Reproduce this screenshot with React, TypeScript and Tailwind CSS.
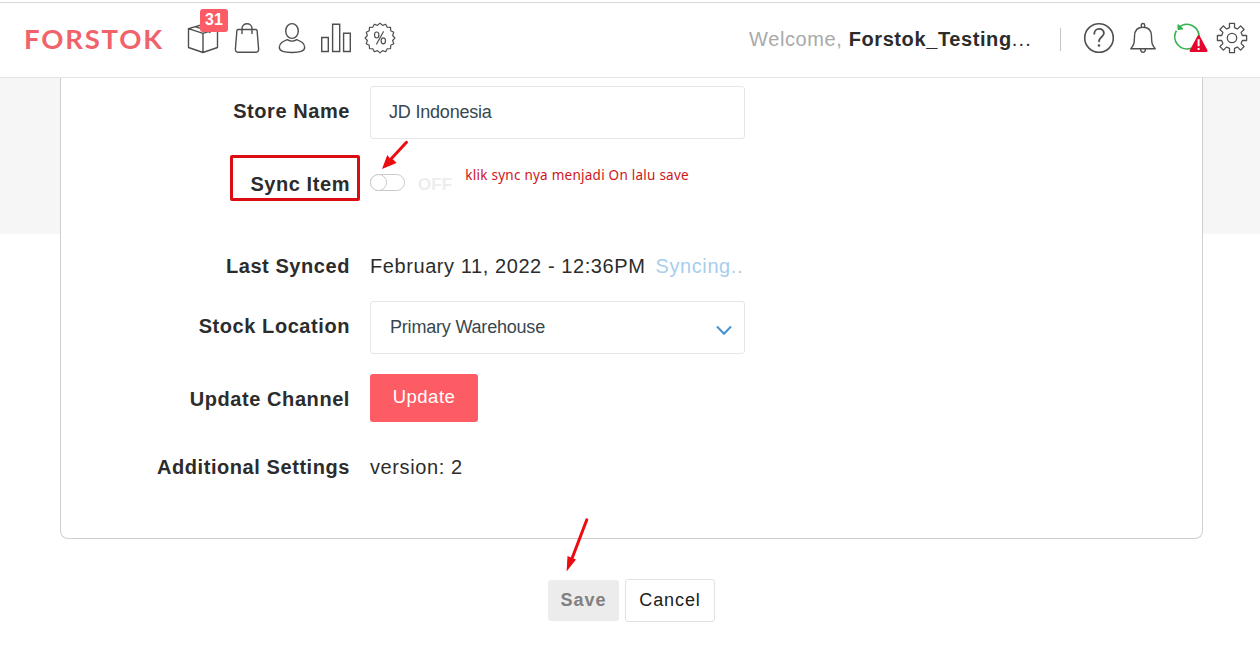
import type { ReactNode } from "react";

const stroke = { fill: "none", stroke: "#4f4f4f", strokeWidth: 1.4, strokeLinejoin: "round", strokeLinecap: "round" } as const;

function starPath(c: number, outer: number, inner: number, count: number) {
  const pts: string[] = [];
  for (let i = 0; i < count * 2; i++) {
    const a = (i / count) * Math.PI - Math.PI / 2 + Math.PI / count;
    const r = i % 2 === 0 ? inner : outer;
    pts.push(`${(c + r * Math.cos(a)).toFixed(2)} ${(c + r * Math.sin(a)).toFixed(2)}`);
  }
  return "M" + pts.join("L") + "Z";
}

function gearPath(c: number) {
  const pts: string[] = [];
  for (let i = 0; i < 8; i++) {
    const a = (i * Math.PI) / 4;
    const shape: [number, number][] = [[-4.1, -9.6], [-2.5, -10.4], [-2.5, -14.6], [2.5, -14.6], [2.5, -10.4], [4.1, -9.6]];
    for (const [x, y] of shape) {
      const px = c + x * Math.cos(a) - y * Math.sin(a);
      const py = c + x * Math.sin(a) + y * Math.cos(a);
      pts.push(`${px.toFixed(2)} ${py.toFixed(2)}`);
    }
  }
  return "M" + pts.join("L") + "Z";
}

function Box() {
  return (
    <svg width="32" height="32" viewBox="0 0 32 32" {...stroke}>
      <path d="M1.5 6.7 16 11.3 30.5 6.7V25.5L16 30.5 1.5 25.5ZM16 11.3V30.5M1.5 6.7 16 2.5 30.5 6.7M8.5 4.8 23 9.2V10.5" />
    </svg>
  );
}

function Bag() {
  return (
    <svg width="26" height="32" viewBox="0 0 26 32" {...stroke}>
      <path d="M4 7.5H22Q23 7.5 23.1 8.5L24.6 27Q24.7 30.3 21.5 30.3H4.5Q1.3 30.3 1.4 27L2.9 8.5Q3 7.5 4 7.5ZM8 11.5V6.5C8 .2 18 .2 18 6.5V11.5" />
    </svg>
  );
}

function Person() {
  return (
    <svg width="28" height="32" viewBox="0 0 28 32" {...stroke}>
      <ellipse cx="14" cy="9" rx="6.3" ry="7.4" />
      <path d="M9.3 17.6C5 19.4 1.3 21 1.3 25.6 1.3 29 7 30.5 14 30.5S26.7 29 26.7 25.6C26.7 21 23 19.4 18.7 17.6Q14 20.7 9.3 17.6Z" />
    </svg>
  );
}

function Bars() {
  return (
    <svg width="32" height="32" viewBox="0 0 32 32" {...stroke} strokeLinejoin="miter">
      <path d="M1.7 15.5H8.3V29.5H1.7ZM12.6 2.3H19.7V29.5H12.6ZM23.6 11.3H30.3V29.5H23.6Z" />
    </svg>
  );
}

function Discount() {
  return (
    <svg width="32" height="32" viewBox="0 0 32 32" {...stroke} strokeWidth={1.2}>
      <path d={starPath(16, 14.9, 12.9, 16)} />
      <ellipse cx="12.7" cy="13" rx="2.2" ry="3" />
      <ellipse cx="19.3" cy="18.8" rx="2.2" ry="3" />
      <path d="M19.4 9.8 12.6 22" />
    </svg>
  );
}

function Help() {
  return (
    <svg width="32" height="32" viewBox="0 0 32 32" {...stroke} strokeWidth={1.6}>
      <circle cx="16" cy="16" r="14.3" />
      <path d="M11.3 11.8C11.3 5.2 20.9 5.3 20.9 11.3 20.9 14.9 16 15.1 16 19.3" strokeWidth="1.8" />
      <circle cx="16" cy="23.5" r="1.3" fill="#4f4f4f" stroke="none" />
    </svg>
  );
}

function Bell() {
  return (
    <svg width="28" height="32" viewBox="0 0 28 32" {...stroke}>
      <path d="M1.8 26.8C5.5 22.4 5.3 20.5 5.5 14 5.7 8.6 8.6 5.3 14 5.3S22.3 8.6 22.5 14C22.7 20.5 22.5 22.4 26.2 26.8ZM12.3 5.3V3.2Q12.3 1.5 14 1.5T15.7 3.2V5.3M11.5 27Q11.8 30.4 14 30.4T16.5 27" />
    </svg>
  );
}

function SyncAlert() {
  return (
    <svg width="36" height="32" viewBox="0 0 36 32" fill="none">
      <path d="M3.4 8.6A12.2 12.2 0 0 0 18 26.2" stroke="#36b34f" strokeWidth="1.7" />
      <path d="M5.6 5.6A12.2 12.2 0 0 1 26 15" stroke="#36b34f" strokeWidth="1.7" />
      <path d="M5 2.6 5 7.6 10 6.8Z" fill="#36b34f" stroke="#36b34f" strokeWidth="1" />
      <path d="M25.6 14.4 33.4 28.7H17.8Z" fill="#e4062f" stroke="#e4062f" strokeWidth="2.4" strokeLinejoin="round" />
      <path d="M25.6 17.2V24.2M25.6 26V28" stroke="#fff" strokeWidth="2" />
    </svg>
  );
}

function Gear() {
  return (
    <svg width="32" height="32" viewBox="0 0 32 32" {...stroke} strokeWidth={1.3}>
      <path d={gearPath(16)} />
      <circle cx="16" cy="16" r="4.7" />
    </svg>
  );
}

function Label({ children, className = "" }: { children: ReactNode; className?: string }) {
  return <div className={`text-right text-[20px] leading-[30px] font-bold tracking-[0.57px] text-[#2c2c2c] ${className}`}>{children}</div>;
}

const row = "grid grid-cols-[289px_375px] gap-x-[20px]";

export default function App() {
  return (
    <div className="relative flex h-[650px] w-[1260px] flex-col overflow-hidden bg-white font-['Liberation_Sans',Arial,sans-serif] text-[#2c2c2c]">
      <header className="mt-[2px] flex h-[76px] shrink-0 items-center border-y border-t-[#d8d8d8] border-b-[#e4e4e4] pr-[12px] pl-[24px]">
        <div className="w-[163px] pb-[3px] font-[Lato,sans-serif] text-[27.5px] leading-none font-bold tracking-[1.8px] text-[#f1626a]">FORSTOK</div>
        <nav className="flex items-center pb-[4px]">
          <div className="relative mr-[15px]">
            <Box />
            <span className="absolute -top-[13px] left-[13px] flex h-[23px] w-[28px] items-center justify-center rounded-[3px] bg-[#fb5c66] pb-[1px] text-[16px] leading-[20px] font-bold text-white">31</span>
          </div>
          <div className="mr-[18px]"><Bag /></div>
          <div className="mr-[14px]"><Person /></div>
          <div className="mr-[12px]"><Bars /></div>
          <Discount />
        </nav>
        <div className="ml-auto flex items-center pb-[2px]">
          <div className="text-[20px] tracking-[0.6px] whitespace-nowrap">
            <span className="text-[#a9a9a9]">Welcome, </span>
            <span className="font-bold">Forstok_Testing</span><span className="tracking-[1.2px]">...</span>
          </div>
          <div className="mr-[22px] ml-[28px] h-[23px] w-px bg-[#c4c4c4]" />
          <div className="flex items-center pb-[2px]">
            <div className="mr-[14px]"><Help /></div>
            <div className="mr-[16px]"><Bell /></div>
            <div className="mr-[7px]"><SyncAlert /></div>
            <Gear />
          </div>
        </div>
      </header>

      <main className="bg-[linear-gradient(#f6f6f6_156px,#fff_156px)] pr-[57px] pl-[60px]">
        <section className="h-[461px] rounded-b-[8px] border border-t-0 border-[#cfcfcf] bg-white pt-[8px]">
          <div className={row}>
            <Label className="pt-[10px]">Store Name</Label>
            <div className="flex h-[53px] items-center rounded-[3px] border border-[#e6e6e6] pl-[18px] text-[18px] tracking-[-0.2px] text-[#37474f]">JD Indonesia</div>
          </div>
          <div className={`${row} mt-[30px] h-[30px]`}>
            <Label>Sync Item</Label>
            <div className="flex h-[30px] items-start">
              <div className="mt-[5px] h-[17px] w-[35px] rounded-full border border-[#c9c9c9]">
                <div className="-mt-px -ml-px size-[17px] rounded-full border border-[#c9c9c9] bg-white" />
              </div>
              <span className="mt-[4px] ml-[13px] text-[17px] leading-[24px] font-bold tracking-[0.1px] text-[#ededed]">OFF</span>
              <span className="-mt-[4px] ml-[13px] font-['Noto_Sans',sans-serif] text-[13.5px] leading-[20px] tracking-[0.25px] whitespace-nowrap text-[#cf1418]">klik sync nya menjadi On lalu save</span>
            </div>
          </div>
          <div className={`${row} mt-[52px]`}>
            <Label>Last Synced</Label>
            <div className="text-[20px] leading-[30px] tracking-[0.58px] whitespace-nowrap">
              February 11, 2022 - 12:36PM <span className="ml-[4px] text-[#a9cdec]">Syncing..</span>
            </div>
          </div>
          <div className={`${row} mt-[20px]`}>
            <Label className="pt-[10px]">Stock Location</Label>
            <div className="flex h-[53px] items-center justify-between rounded-[3px] border border-[#e6e6e6] pr-[12px] pl-[19px] text-[18px] tracking-[-0.2px] text-[#37474f]">
              Primary Warehouse
              <svg width="16" height="11" viewBox="0 0 16 11" fill="none" className="mt-[5px]"><path d="M1 1.5 8 8.8 15 1.5" stroke="#4593cf" strokeWidth="2" /></svg>
            </div>
          </div>
          <div className={`${row} mt-[20px]`}>
            <Label className="pt-[10px]">Update Channel</Label>
            <button className="flex h-[48px] w-[108px] items-center justify-center rounded-[3px] bg-[#fd5c65] pb-[2px] text-[18.5px] tracking-[0.5px] text-white">Update</button>
          </div>
          <div className={`${row} mt-[30px]`}>
            <Label>Additional Settings</Label>
            <div className="text-[20px] leading-[30px] tracking-[0.6px]">version: 2</div>
          </div>
        </section>
      </main>

      <footer className="flex items-center gap-[6px] pt-[40px] pl-[548px]">
        <button className="h-[41px] w-[71px] rounded-[3px] bg-[#ececec] text-[18px] font-bold tracking-[1px] text-[#808080]">Save</button>
        <button className="h-[43px] w-[90px] rounded-[3px] border border-[#e2e2e2] bg-white text-[18px] tracking-[0.9px] text-[#202020]">Cancel</button>
      </footer>

      <div className="absolute top-[155px] left-[230px] h-[46px] w-[130px] rounded-[2px] border-3 border-[#dc0d12]" />
      <svg className="absolute top-[138px] left-[378px]" width="32" height="34" viewBox="0 0 32 34">
        <path d="M28.5 4.3 13 21" stroke="#ec0c10" strokeWidth="3" strokeLinecap="round" />
        <path d="M4 31 9.3 17 12 20.4 15.5 21.8 18.5 25Z" fill="#ec0c10" />
      </svg>
      <svg className="absolute top-[516px] left-[562px]" width="28" height="58" viewBox="0 0 28 58">
        <path d="M24.8 3.8 10.2 42" stroke="#ec0c10" strokeWidth="3" strokeLinecap="round" />
        <path d="M4.6 55.5 5.5 40 14 43.5Z" fill="#ec0c10" />
      </svg>
    </div>
  );
}
